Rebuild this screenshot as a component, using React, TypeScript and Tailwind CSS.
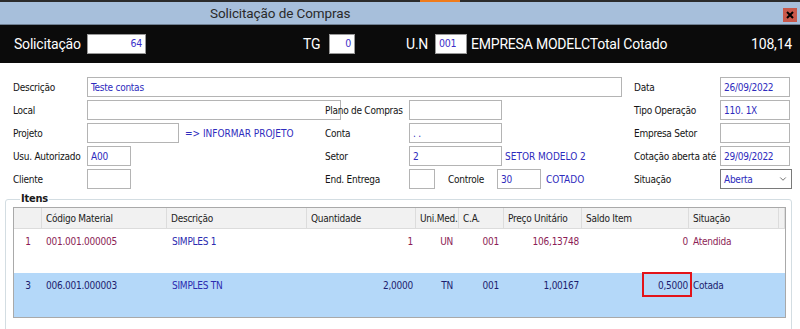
import { ChevronDown } from "lucide-react";

const UI = { fontFamily: '"DejaVu Sans Condensed", "Liberation Sans", sans-serif' };
const HEAD = { fontFamily: 'Roboto, "Noto Sans", sans-serif' };

function Box({ w, value = "", right = false, h = "h-[20px]" }: { w: string; value?: string; right?: boolean; h?: string }) {
    return (
        <div
            className={`${w} ${h} flex items-center border border-[#b4b4b4] bg-white px-[3px] text-[#2e2bbd] ${right ? "justify-end" : ""}`}
        >
            {value}
        </div>
    );
}

function Label({ children }: { children: React.ReactNode }) {
    return <div className="flex items-center text-[#141414]">{children}</div>;
}

const cols = "grid-cols-[28px_125px_140px_109px_43px_45px_78px_107px_90px_1fr]";

const headers = ["", "Código Material", "Descrição", "Quantidade", "Uni.Med.", "C.A.", "Preço Unitário", "Saldo Item", "Situação", ""];

type Row = {
    n: string; cod: string; desc: string; qtd: string; un: string; ca: string; preco: string; saldo: string; sit: string;
};

const rows: Row[] = [
    { n: "1", cod: "001.001.000005", desc: "SIMPLES 1", qtd: "1", un: "UN", ca: "001", preco: "106,13748", saldo: "0", sit: "Atendida" },
    { n: "3", cod: "006.001.000003", desc: "SIMPLES TN", qtd: "2,0000", un: "TN", ca: "001", preco: "1,00167", saldo: "0,5000", sit: "Cotada" },
];

export default function App() {
    return (
        <div className="w-[800px] h-[329px] overflow-hidden bg-white text-[10px] tracking-[-0.25px]" style={UI}>
            {/* top strip */}
            <div className="h-[2px] bg-[#2b2b2b] flex">
                <div className="ml-[420px] w-[40px] bg-[#f07b1c]"></div>
            </div>

            {/* title bar */}
            <div className="h-[23px] bg-[#a7bfdb] border-b border-[#6f7f92] flex items-center relative">
                <span className="pl-[210px] text-[13.5px] tracking-[-0.1px] text-[#2a2a2a]" style={HEAD}>
                    Solicitação de Compras
                </span>
                <div className="absolute right-[3px] top-[6px] w-[14px] h-[14px] bg-[#c9584a] flex items-center justify-center">
                    <svg width="8" height="8" viewBox="0 0 8 8">
                        <path d="M1 1 L7 7 M7 1 L1 7" stroke="#000" strokeWidth="2" />
                    </svg>
                </div>
            </div>

            {/* black header */}
            <div className="h-[38px] bg-[#0b0b0b] flex items-center text-white text-[14px] tracking-[-0.2px]" style={HEAD}>
                <span className="pl-[14px] w-[87px]">Solicitação</span>
                <div className="w-[59px] h-[20px] bg-white border border-[#999] flex items-center justify-end pr-[3px] text-[10.5px] text-[#3b2fc9]" style={UI}>64</div>
                <span className="ml-[157px] w-[26px]">TG</span>
                <div className="w-[26px] h-[20px] bg-white border border-[#999] flex items-center justify-end pr-[3px] text-[10.5px] text-[#3b2fc9]" style={UI}>0</div>
                <span className="ml-[51px] w-[29px]">U.N</span>
                <div className="w-[32px] h-[20px] bg-white border border-[#999] flex items-center pl-[3px] text-[10.5px] text-[#3b2fc9]" style={UI}>001</div>
                <span className="ml-[4px] flex-1 whitespace-nowrap">EMPRESA MODELCTotal Cotado</span>
                <span className="pr-[8px]">108,14</span>
            </div>

            {/* form */}
            <div className="pt-[14px] pl-[13px] grid grid-cols-[74px_238px_84px_225px_86px_80px] auto-rows-[20px] gap-y-[3px]">
                <Label>Descrição</Label>
                <div className="col-span-3"><Box w="w-[535px]" value="Teste contas" /></div>
                <Label>Data</Label>
                <Box w="w-[70px]" value="26/09/2022" />

                <Label>Local</Label>
                <Box w="w-[254px]" />
                <Label><span className="whitespace-nowrap">Plano de Compras</span></Label>
                <Box w="w-[93px]" />
                <Label>Tipo Operação</Label>
                <Box w="w-[70px]" value="110. 1X" />

                <Label>Projeto</Label>
                <div className="flex items-center">
                    <Box w="w-[92px]" />
                    <span className="ml-[6px] text-[#2e2bbd] whitespace-nowrap tracking-normal">=&gt; INFORMAR PROJETO</span>
                </div>
                <Label>Conta</Label>
                <Box w="w-[93px]" value="  . ." />
                <Label>Empresa Setor</Label>
                <Box w="w-[70px]" />

                <Label><span className="whitespace-nowrap">Usu. Autorizado</span></Label>
                <Box w="w-[44px]" value="A00" />
                <Label>Setor</Label>
                <div className="flex items-center">
                    <Box w="w-[93px]" value="2" />
                    <span className="ml-[3px] text-[#2e2bbd] whitespace-nowrap tracking-normal">SETOR MODELO 2</span>
                </div>
                <Label><span className="whitespace-nowrap">Cotação aberta até</span></Label>
                <Box w="w-[70px]" value="29/09/2022" />

                <Label>Cliente</Label>
                <Box w="w-[44px]" />
                <Label>End. Entrega</Label>
                <div className="flex items-center">
                    <Box w="w-[26px]" />
                    <span className="ml-[13px] w-[49px] text-[#141414]">Controle</span>
                    <Box w="w-[44px]" value="30" />
                    <span className="ml-[5px] text-[#2e2bbd] tracking-normal">COTADO</span>
                </div>
                <Label>Situação</Label>
                <div className="w-[72px] h-[20px] border border-[#7a7a7a] bg-white flex items-center justify-between pl-[3px] pr-[3px] text-[#2e2bbd]">
                    Aberta
                    <ChevronDown size={10} strokeWidth={2} className="text-[#555]" />
                </div>
            </div>

            {/* itens */}
            <fieldset className="mt-[4px] ml-[5px] w-[787px] border border-[#d3dde2] rounded-[3px] pl-[7px] pr-[5px] pt-[2px] pb-[20px]">
                <legend className="ml-[7px] px-[1px] font-bold text-[11px] text-[#1a1a1a] leading-[12px]">Itens</legend>
                <div className="border border-[#a9a9a9] bg-white">
                    <div className={`grid ${cols} h-[21px] bg-[#f1f1f1]`}>
                        {headers.map((h, i) => (
                            <div key={i} className="border-r border-b border-[#dcdcdc] flex items-center pl-[4px] text-[#222] whitespace-nowrap">
                                {h}
                            </div>
                        ))}
                    </div>
                    {rows.map((r, i) => {
                        const sel = i === 1;
                        const c = sel ? "text-[#1c1c6e]" : "text-[#8c1d55]";
                        return (
                            <div key={i} className={`grid ${cols} h-[44px] ${sel ? "bg-[#b4d8f9]" : "bg-white"} ${c}`}>
                                <div className="pt-[5px] text-center">{r.n}</div>
                                <div className="pt-[5px] pl-[4px]">{r.cod}</div>
                                <div className="pt-[5px] pl-[5px] text-[#2b2bb0]">{r.desc}</div>
                                <div className="pt-[5px] pr-[3px] text-right">{r.qtd}</div>
                                <div className="pt-[5px] pr-[6px] text-right">{r.un}</div>
                                <div className="pt-[5px] pr-[5px] text-right">{r.ca}</div>
                                <div className="pt-[5px] pr-[3px] text-right">{r.preco}</div>
                                <div className="pt-[5px] pr-[1px] text-right relative">
                                    {r.saldo}
                                    {sel && (
                                        <div className="absolute right-[-3px] top-[-1px] w-[50px] h-[25px] border-2 border-[#e3141a]"></div>
                                    )}
                                </div>
                                <div className="pt-[5px] pl-[4px]">{r.sit}</div>
                                <div></div>
                            </div>
                        );
                    })}
                </div>
            </fieldset>
        </div>
    );
}
